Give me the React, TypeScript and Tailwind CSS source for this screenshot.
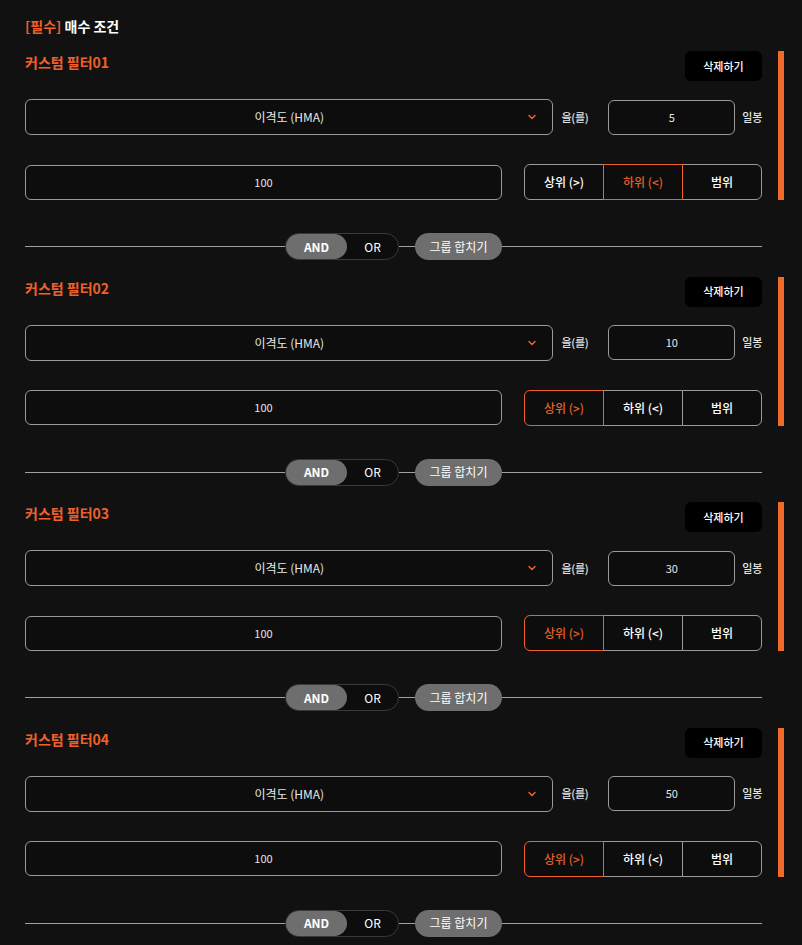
import { ChevronDown } from "lucide-react";

type Filter = { id: string; days: string; value: string; mode: "up" | "down" | "range" };

const filters: Filter[] = [
  { id: "01", days: "5", value: "100", mode: "down" },
  { id: "02", days: "10", value: "100", mode: "up" },
  { id: "03", days: "30", value: "100", mode: "up" },
  { id: "04", days: "50", value: "100", mode: "up" },
];

const modes: { key: Filter["mode"]; label: string }[] = [
  { key: "up", label: "상위 (>)" },
  { key: "down", label: "하위 (<)" },
  { key: "range", label: "범위" },
];

function FilterBlock({ f, last }: { f: Filter; last: boolean }) {
  return (
    <section>
      <div className="flex gap-4">
        <div className="min-w-0 flex-1">
          <div className="flex h-[30px] items-start justify-between">
            <h3 className="text-[14px] font-bold leading-[22px] text-[#f0602a]">커스텀 필터{f.id}</h3>
            <button className="h-[30px] w-[77px] rounded-md bg-black text-[11px] font-medium text-white">삭제하기</button>
          </div>

          <div className="mt-[18px] flex h-9 items-center">
            <div className="relative flex h-9 flex-1 items-center justify-center rounded-md border border-[#9a9a9a] bg-[#0d0d0d] text-[12px] text-[#e6e6e6]">
              이격도 (HMA)
              <ChevronDown className="absolute right-[14px] top-1/2 h-3 w-3 -translate-y-1/2 text-[#f0602a]" strokeWidth={3} />
            </div>
            <span className="ml-[8px] whitespace-nowrap text-[11px] font-medium tracking-[-0.3px] text-[#e6e6e6]">을(를)</span>
            <div className="ml-[20px] flex h-[35px] w-[127px] items-center justify-center rounded-md border border-[#9a9a9a] bg-[#0d0d0d] text-[11px] text-[#e6e6e6]">
              {f.days}
            </div>
            <span className="ml-[7px] whitespace-nowrap text-[11px] font-medium tracking-[-0.3px] text-[#e6e6e6]">일봉</span>
          </div>

          <div className="mt-[29px] flex h-9 items-center">
            <div className="flex h-[35px] flex-1 items-center justify-center rounded-md border border-[#9a9a9a] bg-[#0d0d0d] text-[11px] text-[#e6e6e6]">
              {f.value}
            </div>
            <div className="ml-[22px] flex h-9 w-[238px]">
              {modes.map((m, i) => {
                const on = m.key === f.mode;
                return (
                  <button
                    key={m.key}
                    className={
                      "relative flex-1 border bg-[#0d0d0d] text-[12px] font-medium " +
                      (i === 0 ? "rounded-l-md " : "-ml-px ") +
                      (i === 2 ? "rounded-r-md " : "") +
                      (on ? "z-10 border-[#f0602a] text-[#e0602a]" : "border-[#9a9a9a] text-white")
                    }
                  >
                    {m.label}
                  </button>
                );
              })}
            </div>
          </div>
        </div>
        <div className="w-[6px] bg-[#f26a2a]" />
      </div>

      <div className={"mt-[33px] flex h-[27px] items-center pr-[22px] " + (last ? "mb-4" : "mb-[16.5px]")}>
        <div className="h-px flex-1 bg-[#a0a0a0]" />
        <div className="flex h-[27px] w-[114px] rounded-full border border-[#3a3a3a] bg-[#0d0d0d]">
          <span className="flex w-[61px] items-center justify-center rounded-full bg-[#6e6e6e] text-[12px] font-bold text-white">AND</span>
          <span className="flex flex-1 items-center justify-center text-[12px] text-white">OR</span>
        </div>
        <div className="h-px w-4 bg-[#a0a0a0]" />
        <button className="h-[27px] w-[87px] rounded-full bg-[#6e6e6e] text-[12px] text-white">그룹 합치기</button>
        <div className="h-px w-[260px] bg-[#a0a0a0]" />
      </div>
    </section>
  );
}

export default function App() {
  return (
    <div
      className="min-h-[945px] bg-[#111111] pl-[25px] pr-[18px] pt-[15px]"
      style={{ fontFamily: '"Noto Sans CJK KR", "Noto Sans", sans-serif' }}
    >
      <h2 className="mb-[14px] text-[14px] font-bold leading-[22px] text-white">
        <span className="text-[#f0602a]">[필수]</span> 매수 조건
      </h2>
      {filters.map((f, i) => (
        <FilterBlock key={f.id} f={f} last={i === filters.length - 1} />
      ))}
    </div>
  );
}
